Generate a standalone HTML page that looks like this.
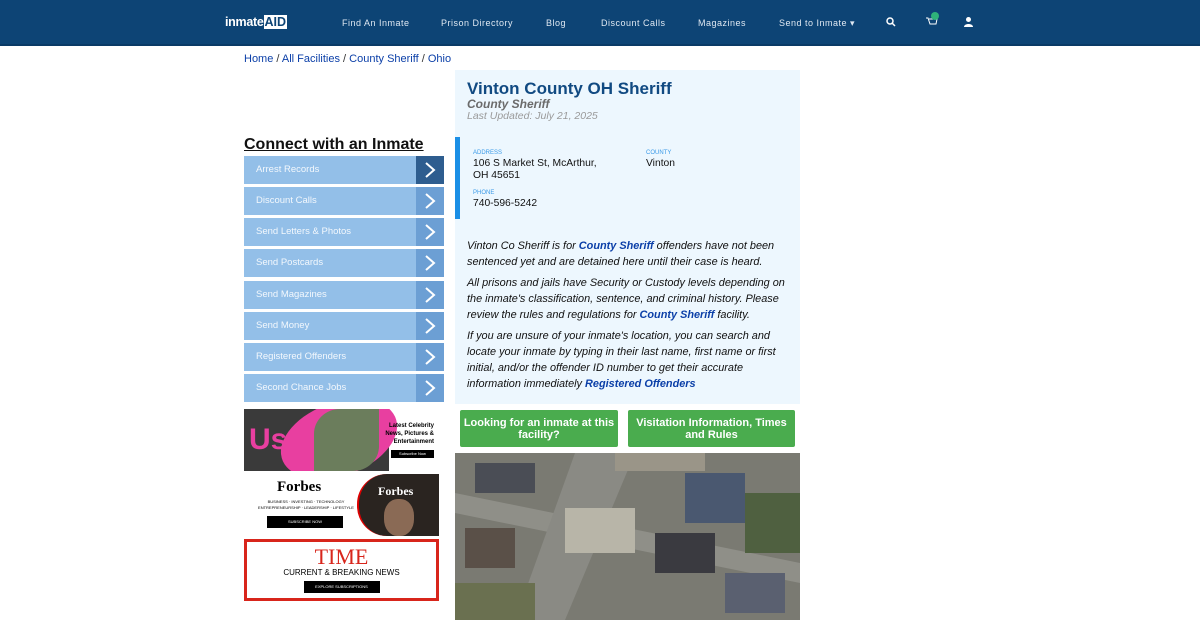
<!DOCTYPE html>
<html><head><meta charset="utf-8"><style>
*{margin:0;padding:0;box-sizing:border-box}
body{width:1200px;height:620px;overflow:hidden;background:#fff;font-family:"Liberation Sans",sans-serif;position:relative}
.nav{position:absolute;left:0;top:0;width:1200px;height:46px;background:#0d4475;border-bottom:2px solid #0a3a66}
.nav span{position:absolute;top:18px;color:#dfe8f2;font-size:9px;letter-spacing:.5px}
.logo{position:absolute;left:225px;top:15px;color:#fff;font-size:12.5px;font-weight:bold;letter-spacing:-.3px}
.bc{position:absolute;left:244px;top:53px;font-size:11px;color:#333}
.bc a{text-decoration:none;color:#0b3fa8}
h2{position:absolute;left:244px;top:136px;font-size:16px;font-weight:bold;text-decoration:underline;color:#111}
.row{position:absolute;left:244px;width:200px;height:28px;background:#93bfe8;color:#f3f8fd;font-size:9.5px;line-height:28px;padding-left:12px}
.row i{position:absolute;right:0;top:0;width:28px;height:28px;background:#6c9fd4}
.row i svg{position:absolute;left:7px;top:5px}
.panel{position:absolute;left:455px;top:70px;width:345px;height:334px;background:#edf7fe}
.panel h1{position:absolute;left:12px;top:9px;font-size:17px;color:#114a82}
.sub{position:absolute;left:12px;top:27px;font-size:12px;font-style:italic;font-weight:bold;color:#6b6b6b}
.upd{position:absolute;left:12px;top:40px;font-size:10.5px;font-style:italic;color:#9a9a9a}
.bar{position:absolute;left:0;top:67px;width:5px;height:82px;background:#1b8fe6}
.lbl{position:absolute;font-size:6px;color:#3a9ae8}
.val{position:absolute;font-size:10.3px;color:#111;line-height:11.5px}
.txt{position:absolute;left:12px;top:168px;width:331px;font-size:10.9px;font-style:italic;color:#111;line-height:16px}
.txt p{margin-bottom:5px}.txt b{color:#0b3fa8}
.btn{position:absolute;top:410px;height:37px;background:#4aac4e;color:#fff;font-size:11px;font-weight:bold;text-align:center;line-height:12px;padding-top:7px;border-radius:2px}
</style></head><body>
<div class="nav">
<div class="logo">inmate<span style="position:static;font-size:12.5px;background:#fff;color:#0d4475;padding:0 1px;letter-spacing:0">AID</span></div>
<span style="left:342px">Find An Inmate</span><span style="left:441px">Prison Directory</span><span style="left:546px">Blog</span><span style="left:601px">Discount Calls</span><span style="left:698px">Magazines</span><span style="left:779px">Send to Inmate ▾</span>
<svg style="position:absolute;left:886px;top:17px" width="10" height="10"><circle cx="4" cy="4" r="3" stroke="#fff" stroke-width="1.5" fill="none"/><line x1="6" y1="6" x2="9" y2="9" stroke="#fff" stroke-width="1.5"/></svg>
<svg style="position:absolute;left:925px;top:12px" width="16" height="16"><path d="M1 6h2l2 6h6l1-5H4" stroke="#fff" fill="none"/><circle cx="10" cy="4" r="4" fill="#2fb37a"/></svg>
<svg style="position:absolute;left:964px;top:17px" width="9" height="10"><circle cx="4.5" cy="2.5" r="2.5" fill="#fff"/><path d="M0 10c0-4 9-4 9 0z" fill="#fff"/></svg>
</div>
<div class="bc"><a>Home</a> / <a>All Facilities</a> / <a>County Sheriff</a> / <a>Ohio</a></div>
<h2>Connect with an Inmate</h2>
<div class="row" style="top:156px">Arrest Records<i style="background:#2e5d8f"><svg width="14" height="18"><path d="M3 2l8 7-8 7" stroke="#fff" stroke-width="2" fill="none"/></svg></i></div>
<div class="row" style="top:187px">Discount Calls<i><svg width="14" height="18"><path d="M3 2l8 7-8 7" stroke="#fff" stroke-width="2" fill="none"/></svg></i></div>
<div class="row" style="top:218px">Send Letters &amp; Photos<i><svg width="14" height="18"><path d="M3 2l8 7-8 7" stroke="#fff" stroke-width="2" fill="none"/></svg></i></div>
<div class="row" style="top:249px">Send Postcards<i><svg width="14" height="18"><path d="M3 2l8 7-8 7" stroke="#fff" stroke-width="2" fill="none"/></svg></i></div>
<div class="row" style="top:281px">Send Magazines<i><svg width="14" height="18"><path d="M3 2l8 7-8 7" stroke="#fff" stroke-width="2" fill="none"/></svg></i></div>
<div class="row" style="top:312px">Send Money<i><svg width="14" height="18"><path d="M3 2l8 7-8 7" stroke="#fff" stroke-width="2" fill="none"/></svg></i></div>
<div class="row" style="top:343px">Registered Offenders<i><svg width="14" height="18"><path d="M3 2l8 7-8 7" stroke="#fff" stroke-width="2" fill="none"/></svg></i></div>
<div class="row" style="top:374px">Second Chance Jobs<i><svg width="14" height="18"><path d="M3 2l8 7-8 7" stroke="#fff" stroke-width="2" fill="none"/></svg></i></div>
<div style="position:absolute;left:244px;top:409px;width:195px;height:62px;background:#fff;overflow:hidden">
<div style="position:absolute;left:0;top:0;width:145px;height:62px;background:#3a3a3a"></div>
<div style="position:absolute;left:40px;top:-10px;width:110px;height:80px;background:#e83fa0;border-radius:50%;transform:skewX(-25deg)"></div>
<div style="position:absolute;left:70px;top:0;width:65px;height:62px;background:#6b7d5c;border-radius:40% 0 40% 0"></div>
<div style="position:absolute;left:5px;top:14px;font-size:30px;font-weight:bold;color:#e83fa0">Us</div>
<div style="position:absolute;right:5px;top:13px;font-size:6px;font-weight:bold;text-align:right;line-height:8px">Latest Celebrity<br>News, Pictures &amp;<br>Entertainment</div>
<div style="position:absolute;right:5px;top:41px;width:43px;height:8px;background:#000;color:#fff;font-size:4px;text-align:center;line-height:8px">Subscribe Now</div></div>
<div style="position:absolute;left:244px;top:474px;width:195px;height:62px;background:#fff">
<div style="position:absolute;left:33px;top:5px;font-family:'Liberation Serif',serif;font-weight:bold;font-size:15px">Forbes</div>
<div style="position:absolute;left:14px;top:25px;font-size:4px;line-height:6px;text-align:center;width:96px">BUSINESS · INVESTING · TECHNOLOGY<br>ENTREPRENEURSHIP · LEADERSHIP · LIFESTYLE</div>
<div style="position:absolute;left:23px;top:42px;width:76px;height:12px;background:#000;color:#fff;font-size:4px;text-align:center;line-height:12px">SUBSCRIBE NOW</div>
<div style="position:absolute;left:113px;top:0;width:82px;height:62px;background:#2a2420;border-radius:30px 0 0 30px;border-left:2px solid #d00"></div>
<div style="position:absolute;left:134px;top:10px;font-family:'Liberation Serif',serif;color:#fff;font-weight:bold;font-size:12px">Forbes</div>
<div style="position:absolute;left:140px;top:25px;width:30px;height:37px;background:#8a6a55;border-radius:45%"></div></div>
<div style="position:absolute;left:244px;top:539px;width:195px;height:62px;border:3px solid #d8251b;background:#fff;text-align:center">
<div style="font-family:'Liberation Serif',serif;color:#d8251b;font-size:22px;line-height:22px;margin-top:4px">TIME</div>
<div style="font-size:8px;line-height:10px">CURRENT &amp; BREAKING NEWS</div>
<div style="margin:3px auto 0;width:76px;height:12px;background:#000;color:#fff;font-size:4px;line-height:12px">EXPLORE SUBSCRIPTIONS</div></div>
<div class="panel">
<h1>Vinton County OH Sheriff</h1>
<div class="sub">County Sheriff</div>
<div class="upd">Last Updated: July 21, 2025</div>
<div class="bar"></div>
<div class="lbl" style="left:18px;top:80px">ADDRESS</div>
<div class="val" style="left:18px;top:88px">106 S Market St, McArthur,<br>OH 45651</div>
<div class="lbl" style="left:191px;top:80px">COUNTY</div>
<div class="val" style="left:191px;top:88px">Vinton</div>
<div class="lbl" style="left:18px;top:120px">PHONE</div>
<div class="val" style="left:18px;top:128px">740-596-5242</div>
<div class="txt"><p>Vinton Co Sheriff is for <b>County Sheriff</b> offenders have not been sentenced yet and are detained here until their case is heard.</p><p>All prisons and jails have Security or Custody levels depending on the inmate's classification, sentence, and criminal history. Please review the rules and regulations for <b>County Sheriff</b> facility.</p><p>If you are unsure of your inmate's location, you can search and locate your inmate by typing in their last name, first name or first initial, and/or the offender ID number to get their accurate information immediately <b>Registered Offenders</b></p></div>
</div>
<div class="btn" style="left:460px;width:158px">Looking for an inmate at this facility?</div>
<div class="btn" style="left:628px;width:167px">Visitation Information, Times and Rules</div>
<svg style="position:absolute;left:455px;top:453px" width="345" height="167">
<rect width="345" height="167" fill="#7a7a72"/>
<path d="M0 40 L345 110 L345 130 L0 60Z" fill="#8f8f88"/>
<path d="M120 0 L180 0 L110 167 L60 167Z" fill="#8a8a84"/>
<rect x="20" y="10" width="60" height="30" fill="#4a4d55"/>
<rect x="110" y="55" width="70" height="45" fill="#b8b5a8"/>
<rect x="10" y="75" width="50" height="40" fill="#5a5048"/>
<rect x="230" y="20" width="60" height="50" fill="#4a5870"/>
<rect x="200" y="80" width="60" height="40" fill="#3a3a40"/>
<rect x="270" y="120" width="60" height="40" fill="#5a6070"/>
<rect x="0" y="130" width="80" height="37" fill="#6a7050"/>
<rect x="290" y="40" width="55" height="60" fill="#4f6040"/>
<rect x="160" y="0" width="90" height="18" fill="#9a9588"/>
</svg>
</body></html>
